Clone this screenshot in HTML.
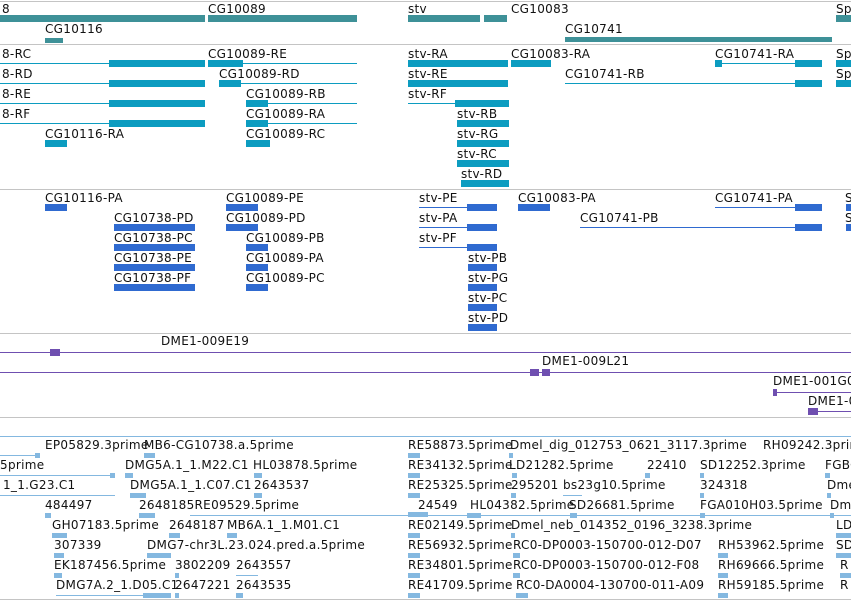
<!DOCTYPE html>
<html><head><meta charset="utf-8"><style>
body{margin:0;width:851px;height:601px;overflow:hidden;background:#fff;position:relative;font-family:"DejaVu Sans","Liberation Sans",sans-serif;font-size:12px;color:#111}
span{position:absolute;line-height:14px;white-space:nowrap;letter-spacing:0.3px}
b{position:absolute;display:block}
.g{height:1px;background:#c4c4c4;left:0;width:851px}
.a{background:#3e9198}.c{background:#0c9cc0}.p{background:#2f6ad0}.v{background:#6f4fb0}.e{background:#84b8e0}
.l{height:1px}.k{height:7px}.s{height:5px}
</style></head><body>
<b class="g" style="top:1px"></b><b class="g" style="top:44px"></b><b class="g" style="top:189px"></b><b class="g" style="top:333px"></b><b class="g" style="top:417px"></b><b class="g" style="top:599px"></b>

<span style="left:2px;top:2px">8</span><b class="a k" style="left:0;top:15px;width:205px"></b>
<span style="left:208px;top:2px">CG10089</span><b class="a k" style="left:208px;top:15px;width:149px"></b>
<span style="left:408px;top:2px">stv</span><b class="a k" style="left:408px;top:15px;width:72px"></b>
<span style="left:511px;top:2px">CG10083</span><b class="a k" style="left:484px;top:15px;width:23px"></b>
<span style="left:836px;top:2px">Spt</span><b class="a k" style="left:836px;top:15px;width:15px"></b>
<span style="left:45px;top:22px">CG10116</span><b class="a s" style="left:45px;top:38px;width:18px"></b>
<span style="left:565px;top:22px">CG10741</span><b class="a s" style="left:565px;top:37px;width:267px"></b>

<span style="left:2px;top:47px">8-RC</span><b class="c l" style="left:0;top:63px;width:205px"></b><b class="c k" style="left:109px;top:60px;width:96px"></b>
<span style="left:2px;top:67px">8-RD</span><b class="c l" style="left:0;top:83px;width:205px"></b><b class="c k" style="left:109px;top:80px;width:96px"></b>
<span style="left:2px;top:87px">8-RE</span><b class="c l" style="left:0;top:103px;width:205px"></b><b class="c k" style="left:109px;top:100px;width:96px"></b>
<span style="left:2px;top:107px">8-RF</span><b class="c l" style="left:0;top:123px;width:205px"></b><b class="c k" style="left:109px;top:120px;width:96px"></b>
<span style="left:45px;top:127px">CG10116-RA</span><b class="c k" style="left:45px;top:140px;width:22px"></b>
<span style="left:208px;top:47px">CG10089-RE</span><b class="c k" style="left:208px;top:60px;width:35px"></b><b class="c l" style="left:208px;top:63px;width:149px"></b>
<span style="left:219px;top:67px">CG10089-RD</span><b class="c k" style="left:219px;top:80px;width:22px"></b><b class="c l" style="left:219px;top:83px;width:138px"></b>
<span style="left:246px;top:87px">CG10089-RB</span><b class="c k" style="left:246px;top:100px;width:22px"></b><b class="c l" style="left:246px;top:103px;width:111px"></b>
<span style="left:246px;top:107px">CG10089-RA</span><b class="c k" style="left:246px;top:120px;width:22px"></b><b class="c l" style="left:246px;top:123px;width:111px"></b>
<span style="left:246px;top:127px">CG10089-RC</span><b class="c k" style="left:246px;top:140px;width:24px"></b>
<span style="left:408px;top:47px">stv-RA</span><b class="c k" style="left:408px;top:60px;width:100px"></b>
<span style="left:408px;top:67px">stv-RE</span><b class="c k" style="left:408px;top:80px;width:100px"></b>
<span style="left:408px;top:87px">stv-RF</span><b class="c l" style="left:408px;top:103px;width:100px"></b><b class="c k" style="left:455px;top:100px;width:54px"></b>
<span style="left:457px;top:107px">stv-RB</span><b class="c k" style="left:457px;top:120px;width:52px"></b>
<span style="left:457px;top:127px">stv-RG</span><b class="c k" style="left:457px;top:140px;width:52px"></b>
<span style="left:457px;top:147px">stv-RC</span><b class="c k" style="left:457px;top:160px;width:52px"></b>
<span style="left:461px;top:167px">stv-RD</span><b class="c k" style="left:461px;top:180px;width:48px"></b>
<span style="left:511px;top:47px">CG10083-RA</span><b class="c k" style="left:511px;top:60px;width:40px"></b>
<span style="left:715px;top:47px">CG10741-RA</span><b class="c l" style="left:715px;top:63px;width:107px"></b><b class="c k" style="left:715px;top:60px;width:7px"></b><b class="c k" style="left:795px;top:60px;width:27px"></b>
<span style="left:565px;top:67px">CG10741-RB</span><b class="c l" style="left:565px;top:83px;width:257px"></b><b class="c k" style="left:795px;top:80px;width:27px"></b>
<span style="left:836px;top:47px">Spt</span><b class="c k" style="left:836px;top:60px;width:15px"></b>
<span style="left:836px;top:67px">Spt</span><b class="c k" style="left:836px;top:80px;width:15px"></b>

<span style="left:45px;top:191px">CG10116-PA</span><b class="p k" style="left:45px;top:204px;width:22px"></b>
<span style="left:226px;top:191px">CG10089-PE</span><b class="p k" style="left:226px;top:204px;width:32px"></b>
<span style="left:114px;top:211px">CG10738-PD</span><b class="p k" style="left:114px;top:224px;width:81px"></b>
<span style="left:226px;top:211px">CG10089-PD</span><b class="p k" style="left:226px;top:224px;width:32px"></b>
<span style="left:114px;top:231px">CG10738-PC</span><b class="p k" style="left:114px;top:244px;width:81px"></b>
<span style="left:246px;top:231px">CG10089-PB</span><b class="p k" style="left:246px;top:244px;width:22px"></b>
<span style="left:114px;top:251px">CG10738-PE</span><b class="p k" style="left:114px;top:264px;width:81px"></b>
<span style="left:246px;top:251px">CG10089-PA</span><b class="p k" style="left:246px;top:264px;width:22px"></b>
<span style="left:114px;top:271px">CG10738-PF</span><b class="p k" style="left:114px;top:284px;width:81px"></b>
<span style="left:246px;top:271px">CG10089-PC</span><b class="p k" style="left:246px;top:284px;width:22px"></b>
<span style="left:419px;top:191px">stv-PE</span><b class="p l" style="left:419px;top:207px;width:78px"></b><b class="p k" style="left:467px;top:204px;width:30px"></b>
<span style="left:419px;top:211px">stv-PA</span><b class="p l" style="left:419px;top:227px;width:78px"></b><b class="p k" style="left:467px;top:224px;width:30px"></b>
<span style="left:419px;top:231px">stv-PF</span><b class="p l" style="left:419px;top:247px;width:78px"></b><b class="p k" style="left:467px;top:244px;width:30px"></b>
<span style="left:468px;top:251px">stv-PB</span><b class="p k" style="left:468px;top:264px;width:29px"></b>
<span style="left:468px;top:271px">stv-PG</span><b class="p k" style="left:468px;top:284px;width:29px"></b>
<span style="left:468px;top:291px">stv-PC</span><b class="p k" style="left:468px;top:304px;width:29px"></b>
<span style="left:468px;top:311px">stv-PD</span><b class="p k" style="left:468px;top:324px;width:29px"></b>
<span style="left:518px;top:191px">CG10083-PA</span><b class="p k" style="left:518px;top:204px;width:32px"></b>
<span style="left:715px;top:191px">CG10741-PA</span><b class="p l" style="left:715px;top:207px;width:107px"></b><b class="p k" style="left:795px;top:204px;width:27px"></b>
<span style="left:580px;top:211px">CG10741-PB</span><b class="p l" style="left:580px;top:227px;width:242px"></b><b class="p k" style="left:795px;top:224px;width:27px"></b>
<span style="left:845px;top:191px">S</span><b class="p k" style="left:846px;top:204px;width:5px"></b>
<span style="left:845px;top:211px">S</span><b class="p k" style="left:846px;top:224px;width:5px"></b>

<b class="v l" style="left:0;top:352px;width:851px"></b><b class="v k" style="left:50px;top:349px;width:10px"></b>
<span style="left:161px;top:334px">DME1-009E19</span>
<b class="v l" style="left:0;top:372px;width:851px"></b><b class="v k" style="left:530px;top:369px;width:9px"></b><b class="v k" style="left:542px;top:369px;width:8px"></b>
<span style="left:542px;top:354px">DME1-009L21</span>
<span style="left:773px;top:374px">DME1-001G0</span><b class="v l" style="left:773px;top:392px;width:78px"></b><b class="v k" style="left:773px;top:389px;width:4px"></b>
<span style="left:808px;top:394px">DME1-0</span><b class="v l" style="left:808px;top:411px;width:43px"></b><b class="v k" style="left:808px;top:408px;width:10px"></b>

<b class="e l" style="left:0;top:436px;width:851px"></b>
<span style="left:45px;top:438px">EP05829.3prime</span><span style="left:144px;top:438px">MB6-CG10738.a.5prime</span><span style="left:408px;top:438px">RE58873.5prime</span><span style="left:510px;top:438px">Dmel_dig_012753_0621_3117.3prime</span><span style="left:763px;top:438px">RH09242.3prime</span>
<span style="left:-12px;top:458px">5.5prime</span><span style="left:125px;top:458px">DMG5A.1_1.M22.C1</span><span style="left:253px;top:458px">HL03878.5prime</span><span style="left:408px;top:458px">RE34132.5prime</span><span style="left:509px;top:458px">LD21282.5prime</span><span style="left:647px;top:458px">22410</span><span style="left:700px;top:458px">SD12252.3prime</span><span style="left:825px;top:458px">FGBO</span>
<span style="left:3px;top:478px">1_1.G23.C1</span><span style="left:130px;top:478px">DMG5A.1_1.C07.C1</span><span style="left:254px;top:478px">2643537</span><span style="left:408px;top:478px">RE25325.5prime</span><span style="left:511px;top:478px">295201</span><span style="left:563px;top:478px">bs23g10.5prime</span><span style="left:700px;top:478px">324318</span><span style="left:827px;top:478px">Dme</span>
<span style="left:45px;top:498px">484497</span><span style="left:139px;top:498px">2648185RE09529.5prime</span><span style="left:418px;top:498px">24549</span><span style="left:470px;top:498px">HL04382.5prime</span><span style="left:569px;top:498px">SD26681.5prime</span><span style="left:700px;top:498px">FGA010H03.5prime</span><span style="left:830px;top:498px">Dm</span>
<span style="left:52px;top:518px">GH07183.5prime</span><span style="left:169px;top:518px">2648187</span><span style="left:227px;top:518px">MB6A.1_1.M01.C1</span><span style="left:408px;top:518px">RE02149.5prime</span><span style="left:511px;top:518px">Dmel_neb_014352_0196_3238.3prime</span><span style="left:836px;top:518px">LD</span>
<span style="left:54px;top:538px">307339</span><span style="left:147px;top:538px">DMG7-chr3L.23.024.pred.a.5prime</span><span style="left:408px;top:538px">RE56932.5prime</span><span style="left:513px;top:538px">RC0-DP0003-150700-012-D07</span><span style="left:718px;top:538px">RH53962.5prime</span><span style="left:836px;top:538px">SD</span>
<span style="left:54px;top:558px">EK187456.5prime</span><span style="left:175px;top:558px">3802209</span><span style="left:236px;top:558px">2643557</span><span style="left:408px;top:558px">RE34801.5prime</span><span style="left:513px;top:558px">RC0-DP0003-150700-012-F08</span><span style="left:718px;top:558px">RH69666.5prime</span><span style="left:840px;top:558px">R</span>
<span style="left:56px;top:578px">DMG7A.2_1.D05.C1</span><span style="left:175px;top:578px">2647221</span><span style="left:236px;top:578px">2643535</span><span style="left:408px;top:578px">RE41709.5prime</span><span style="left:516px;top:578px">RC0-DA0004-130700-011-A09</span><span style="left:718px;top:578px">RH59185.5prime</span><span style="left:840px;top:578px">R</span>
<b class="e l" style="left:0;top:455px;width:38px"></b><b class="e s" style="left:35px;top:453px;width:5px"></b><b class="e s" style="left:144px;top:453px;width:11px"></b><b class="e s" style="left:408px;top:453px;width:12px"></b><b class="e s" style="left:509px;top:453px;width:4px"></b>
<b class="e l" style="left:0;top:475px;width:112px"></b><b class="e s" style="left:110px;top:473px;width:5px"></b><b class="e s" style="left:125px;top:473px;width:8px"></b><b class="e s" style="left:254px;top:473px;width:8px"></b><b class="e s" style="left:408px;top:473px;width:12px"></b><b class="e s" style="left:512px;top:473px;width:5px"></b><b class="e s" style="left:645px;top:473px;width:5px"></b><b class="e s" style="left:700px;top:473px;width:4px"></b><b class="e s" style="left:825px;top:473px;width:5px"></b>
<b class="e l" style="left:0;top:495px;width:115px"></b><b class="e s" style="left:130px;top:493px;width:16px"></b><b class="e s" style="left:254px;top:493px;width:8px"></b><b class="e s" style="left:408px;top:493px;width:12px"></b><b class="e s" style="left:511px;top:493px;width:5px"></b><b class="e l" style="left:563px;top:495px;width:19px"></b><b class="e s" style="left:700px;top:493px;width:4px"></b><b class="e s" style="left:827px;top:493px;width:4px"></b>
<b class="e s" style="left:45px;top:513px;width:6px"></b><b class="e s" style="left:139px;top:513px;width:16px"></b><b class="e l" style="left:190px;top:515px;width:661px"></b><b class="e s" style="left:408px;top:512px;width:20px"></b><b class="e s" style="left:467px;top:513px;width:14px"></b><b class="e s" style="left:570px;top:513px;width:7px"></b><b class="e s" style="left:700px;top:513px;width:5px"></b><b class="e s" style="left:830px;top:513px;width:4px"></b>
<b class="e s" style="left:52px;top:533px;width:15px"></b><b class="e s" style="left:169px;top:533px;width:11px"></b><b class="e s" style="left:227px;top:533px;width:10px"></b><b class="e s" style="left:408px;top:533px;width:12px"></b><b class="e s" style="left:511px;top:533px;width:4px"></b><b class="e s" style="left:836px;top:533px;width:15px"></b>
<b class="e s" style="left:54px;top:553px;width:10px"></b><b class="e s" style="left:147px;top:553px;width:24px"></b><b class="e s" style="left:408px;top:553px;width:12px"></b><b class="e s" style="left:513px;top:553px;width:7px"></b><b class="e s" style="left:718px;top:553px;width:10px"></b><b class="e s" style="left:836px;top:553px;width:15px"></b>
<b class="e s" style="left:54px;top:573px;width:8px"></b><b class="e s" style="left:175px;top:573px;width:4px"></b><b class="e l" style="left:236px;top:575px;width:22px"></b><b class="e s" style="left:408px;top:573px;width:12px"></b><b class="e s" style="left:513px;top:573px;width:7px"></b><b class="e s" style="left:718px;top:573px;width:10px"></b><b class="e s" style="left:840px;top:573px;width:11px"></b>
<b class="e l" style="left:56px;top:595px;width:115px"></b><b class="e s" style="left:143px;top:593px;width:28px"></b><b class="e s" style="left:175px;top:593px;width:4px"></b><b class="e s" style="left:236px;top:593px;width:7px"></b><b class="e s" style="left:408px;top:593px;width:12px"></b><b class="e s" style="left:516px;top:593px;width:12px"></b><b class="e s" style="left:718px;top:593px;width:10px"></b>
</body></html>
